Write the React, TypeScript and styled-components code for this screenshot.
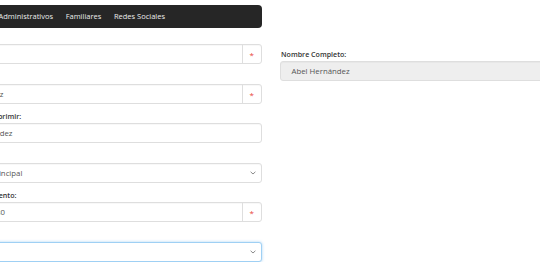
import React from "react";
import styled, { createGlobalStyle } from "styled-components";

const Global = createGlobalStyle`
  html, body { margin: 0; padding: 0; background: #fff; overflow: hidden; }
  body { font-family: "Open Sans", "Liberation Sans", sans-serif; }
  * { box-sizing: border-box; }
`;

const Page = styled.div`
  width: 640px;
  margin-left: -48px;
  padding-top: 5px;
`;

const TabBar = styled.nav`
  width: 310px;
  height: 22.6px;
  background: #262626;
  border-radius: 4px;
  display: flex;
  align-items: center;
`;

const Tab = styled.a<{ $active?: boolean }>`
  font-size: 7.5px;
  color: ${(p) => (p.$active ? "#fff" : "#ececec")};
  padding: 0 6.3px;
  line-height: 22px;
  text-decoration: none;
`;

const Columns = styled.div`
  display: grid;
  grid-template-columns: 310px 310px;
  column-gap: 18px;
  margin-top: 3.4px;
`;

const Column = styled.div<{ $offset?: number }>`
  display: flex;
  flex-direction: column;
  gap: 6.6px;
  padding-top: ${(p) => p.$offset ?? 0}px;
`;

const Group = styled.div`
  display: flex;
  flex-direction: column;
`;

const Label = styled.label`
  font-size: 7.1px;
  font-weight: 600;
  color: #333;
  line-height: 12px;
  margin: 0 0 1px 1px;
  white-space: nowrap;
`;

const Field = styled.div<{ $focus?: boolean; $disabled?: boolean }>`
  height: 20px;
  display: flex;
  align-items: stretch;
  border: 1px solid ${(p) => (p.$focus ? "#9fd0f4" : "#dedede")};
  border-radius: 3px;
  background: ${(p) => (p.$disabled ? "#eeeeee" : "#fff")};
  box-shadow: ${(p) =>
    p.$focus ? "0 0 3px rgba(102,175,233,0.55)" : "inset 0 1px 1px rgba(0,0,0,0.03)"};
  overflow: hidden;
`;

const Value = styled.span`
  flex: 1;
  display: flex;
  align-items: center;
  padding: 0 10.5px;
  font-size: 7.8px;
  color: #555;
  white-space: nowrap;
`;

const Addon = styled.span`
  width: 19.5px;
  border-left: 1px solid #dedede;
  display: flex;
  align-items: center;
  justify-content: center;
  color: #e8453c;
  font-size: 8px;
  line-height: 1;
  padding-top: 2px;
`;

const Caret = styled.span`
  width: 16px;
  display: flex;
  align-items: center;
  justify-content: center;
`;

const Chevron = () => (
  <svg width="6" height="4" viewBox="0 0 6 4">
    <path d="M0.6 0.8 L3 3 L5.4 0.8" fill="none" stroke="#8a8a8a" strokeWidth="1" />
  </svg>
);

type Row = {
  label: string;
  value: string;
  kind: "required" | "text" | "select";
  focus?: boolean;
};

const rows: Row[] = [
  { label: "Nombre(s):", value: "Abel", kind: "required" },
  { label: "Apellidos:", value: "Hernández", kind: "required" },
  { label: "Nombre a Imprimir:", value: "A. Hernández", kind: "text" },
  { label: "Sucursal:", value: "Oficina Principal", kind: "select" },
  { label: "Fecha Nacimiento:", value: "15/03/1980", kind: "required" },
  { label: "Sexo:", value: "", kind: "select", focus: true },
];

export default function App() {
  return (
    <>
      <Global />
      <Page>
        <TabBar>
          <Tab $active>General</Tab>
          <Tab>Administrativos</Tab>
          <Tab>Familiares</Tab>
          <Tab>Redes Sociales</Tab>
        </TabBar>
        <Columns>
          <Column>
            {rows.map((r) => (
              <Group key={r.label}>
                <Label>{r.label}</Label>
                <Field $focus={r.focus}>
                  <Value>{r.value}</Value>
                  {r.kind === "required" && <Addon>*</Addon>}
                  {r.kind === "select" && (
                    <Caret>
                      <Chevron />
                    </Caret>
                  )}
                </Field>
              </Group>
            ))}
          </Column>
          <Column $offset={17.3}>
            <Group>
              <Label>Nombre Completo:</Label>
              <Field $disabled>
                <Value>Abel Hernández</Value>
              </Field>
            </Group>
          </Column>
        </Columns>
      </Page>
    </>
  );
}
